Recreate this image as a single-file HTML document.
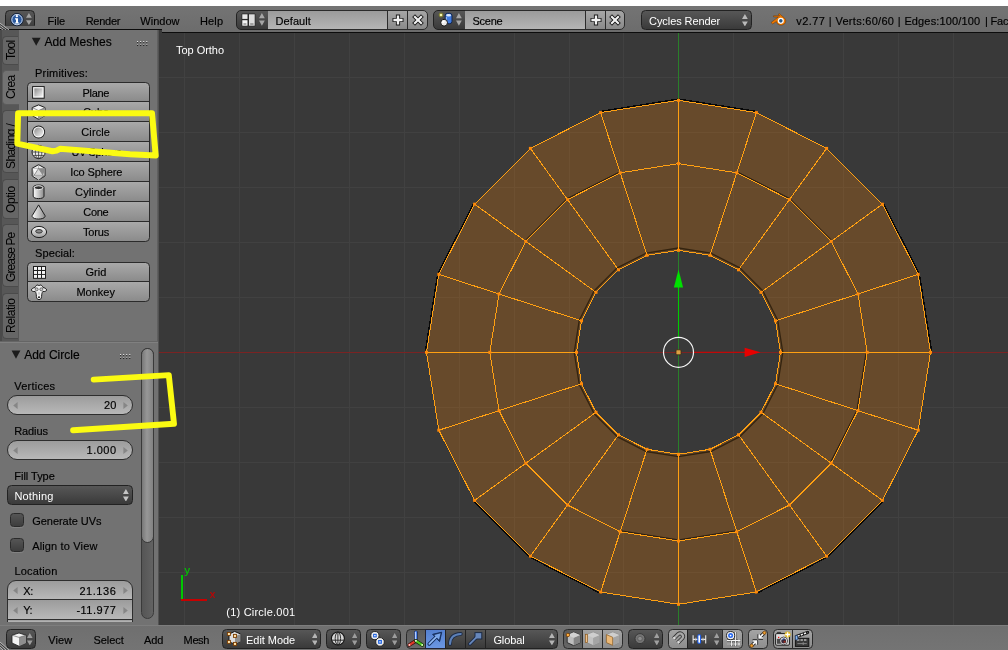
<!DOCTYPE html>
<html><head><meta charset="utf-8"><title>Blender</title>
<style>

html,body{margin:0;padding:0;background:#fff;}
#root{position:relative;will-change:transform;width:1008px;height:650px;overflow:hidden;background:#393939;font-family:"Liberation Sans",sans-serif;}
.a{position:absolute;box-sizing:border-box;}
.t{position:absolute;white-space:pre;-webkit-text-stroke:0.16px currentColor;}
.btn{position:absolute;box-sizing:border-box;border:1px solid #2b2b2b;background:linear-gradient(#a9a9a9,#8b8b8b);}
.num{position:absolute;box-sizing:border-box;border:1px solid #2e2e2e;background:linear-gradient(#9c9c9c,#b8b8b8);}
.menu{position:absolute;box-sizing:border-box;border:1px solid #222;background:linear-gradient(#575757,#3a3a3a);border-radius:4px;}
.lt{position:absolute;box-sizing:border-box;border:1px solid #2b2b2b;background:linear-gradient(#9a9a9a,#7e7e7e);}
.chk{position:absolute;box-sizing:border-box;border:1px solid #2a2a2a;background:linear-gradient(#555,#3d3d3d);border-radius:3.5px;box-shadow:0 1px 0 rgba(255,255,255,0.12);}

</style></head>
<body>
<div id="root">

<svg id="mesh" width="1008" height="650" viewBox="0 0 1008 650" style="position:absolute;left:0;top:0">
<defs><clipPath id="vp"><rect x="158.6" y="30" width="850" height="595.4"/></clipPath></defs>
<g clip-path="url(#vp)">
<path d="M184.5 31V625M239.5 31V625M294.5 31V625M349.5 31V625M404.5 31V625M459.5 31V625M514.5 31V625M569.5 31V625M623.5 31V625M733.5 31V625M788.5 31V625M843.5 31V625M898.5 31V625M953.5 31V625M158 77.5H1008M158 132.5H1008M158 187.5H1008M158 242.5H1008M158 297.5H1008M158 407.5H1008M158 462.5H1008M158 517.5H1008M158 572.5H1008" stroke="#414141" stroke-width="1" fill="none" shape-rendering="crispEdges"/>
<path d="M158 352.3H1008" stroke="#7a2323" stroke-width="1" shape-rendering="crispEdges"/>
<path d="M678.5 31V625" stroke="#2a7f2a" stroke-width="1" shape-rendering="crispEdges"/>
<path d="M678.5 99.0L600.2 111.4M473.6 203.4L437.6 274.0M437.6 274.0L425.2 352.3M473.6 501.2L529.6 557.2M529.6 557.2L600.2 593.2M756.8 593.2L827.4 557.2M827.4 557.2L883.4 501.2M931.8 352.3L919.4 274.0M919.4 274.0L883.4 203.4M756.8 111.4L678.5 99.0" stroke="#080808" stroke-width="1.3" fill="none" shape-rendering="crispEdges"/>
<path d="M678.5 100.3 L600.6 112.6 L530.4 148.4 L474.6 204.2 L438.8 274.4 L426.5 352.3 L438.8 430.2 L474.6 500.4 L530.4 556.2 L600.6 592.0 L678.5 604.3 L756.4 592.0 L826.6 556.2 L882.4 500.4 L918.2 430.2 L930.5 352.3 L918.2 274.4 L882.4 204.2 L826.6 148.4 L756.4 112.6ZM678.5 250.3 L647.0 255.3 L618.5 269.8 L596.0 292.3 L581.5 320.8 L576.5 352.3 L581.5 383.8 L596.0 412.3 L618.5 434.8 L647.0 449.3 L678.5 454.3 L710.0 449.3 L738.5 434.8 L761.0 412.3 L775.5 383.8 L780.5 352.3 L775.5 320.8 L761.0 292.3 L738.5 269.8 L710.0 255.3Z" fill="#ff8500" fill-opacity="0.235" fill-rule="evenodd"/>
<path d="M160 352.3H1008" stroke="#8a3a1a" stroke-width="1" opacity="0.0"/>
<path d="M678.5 248.0 L646.3 253.1 L617.2 267.9 L594.1 291.0 L579.3 320.1 L574.2 352.3 L579.3 384.5 L594.1 413.6 L617.2 436.7 L646.3 451.5 L678.5 456.6 L710.7 451.5 L739.8 436.7 L762.9 413.6 L777.7 384.5 L782.8 352.3 L777.7 320.1 L762.9 291.0 L739.8 267.9 L710.7 253.1Z" stroke="#33230f" stroke-width="1.3" fill="none"/>
<path d="M619.8 171.8L566.9 198.7M566.9 198.7L524.9 240.7M832.1 240.7L790.1 198.7M790.1 198.7L737.2 171.8M620.5 530.7L678.5 539.9M678.5 539.9L736.5 530.7M830.3 462.6L856.9 410.3M856.9 410.3L866.1 352.3" stroke="#2a1c0c" stroke-width="1" fill="none"/>
<path d="M678.5 100.3 L600.6 112.6 L530.4 148.4 L474.6 204.2 L438.8 274.4 L426.5 352.3 L438.8 430.2 L474.6 500.4 L530.4 556.2 L600.6 592.0 L678.5 604.3 L756.4 592.0 L826.6 556.2 L882.4 500.4 L918.2 430.2 L930.5 352.3 L918.2 274.4 L882.4 204.2 L826.6 148.4 L756.4 112.6ZM678.5 163.6 L620.2 172.8 L567.6 199.6 L525.8 241.4 L499.0 294.0 L489.8 352.3 L499.0 410.6 L525.8 463.2 L567.6 505.0 L620.2 531.8 L678.5 541.0 L736.8 531.8 L789.4 505.0 L831.2 463.2 L858.0 410.6 L867.2 352.3 L858.0 294.0 L831.2 241.4 L789.4 199.6 L736.8 172.8ZM678.5 250.3 L647.0 255.3 L618.5 269.8 L596.0 292.3 L581.5 320.8 L576.5 352.3 L581.5 383.8 L596.0 412.3 L618.5 434.8 L647.0 449.3 L678.5 454.3 L710.0 449.3 L738.5 434.8 L761.0 412.3 L775.5 383.8 L780.5 352.3 L775.5 320.8 L761.0 292.3 L738.5 269.8 L710.0 255.3ZM678.5 100.3L678.5 250.3M600.6 112.6L647.0 255.3M530.4 148.4L618.5 269.8M474.6 204.2L596.0 292.3M438.8 274.4L581.5 320.8M426.5 352.3L576.5 352.3M438.8 430.2L581.5 383.8M474.6 500.4L596.0 412.3M530.4 556.2L618.5 434.8M600.6 592.0L647.0 449.3M678.5 604.3L678.5 454.3M756.4 592.0L710.0 449.3M826.6 556.2L738.5 434.8M882.4 500.4L761.0 412.3M918.2 430.2L775.5 383.8M930.5 352.3L780.5 352.3M918.2 274.4L775.5 320.8M882.4 204.2L761.0 292.3M826.6 148.4L738.5 269.8M756.4 112.6L710.0 255.3" stroke="#ffa012" stroke-width="1" fill="none" shape-rendering="crispEdges"/>
<g fill="#ff8a0a"><rect x="677.0" y="98.8" width="3" height="3"/><rect x="599.1" y="111.1" width="3" height="3"/><rect x="528.9" y="146.9" width="3" height="3"/><rect x="473.1" y="202.7" width="3" height="3"/><rect x="437.3" y="272.9" width="3" height="3"/><rect x="425.0" y="350.8" width="3" height="3"/><rect x="437.3" y="428.7" width="3" height="3"/><rect x="473.1" y="498.9" width="3" height="3"/><rect x="528.9" y="554.7" width="3" height="3"/><rect x="599.1" y="590.5" width="3" height="3"/><rect x="677.0" y="602.8" width="3" height="3"/><rect x="754.9" y="590.5" width="3" height="3"/><rect x="825.1" y="554.7" width="3" height="3"/><rect x="880.9" y="498.9" width="3" height="3"/><rect x="916.7" y="428.7" width="3" height="3"/><rect x="929.0" y="350.8" width="3" height="3"/><rect x="916.7" y="272.9" width="3" height="3"/><rect x="880.9" y="202.7" width="3" height="3"/><rect x="825.1" y="146.9" width="3" height="3"/><rect x="754.9" y="111.1" width="3" height="3"/><rect x="677.0" y="162.1" width="3" height="3"/><rect x="618.7" y="171.3" width="3" height="3"/><rect x="566.1" y="198.1" width="3" height="3"/><rect x="524.3" y="239.9" width="3" height="3"/><rect x="497.5" y="292.5" width="3" height="3"/><rect x="488.3" y="350.8" width="3" height="3"/><rect x="497.5" y="409.1" width="3" height="3"/><rect x="524.3" y="461.7" width="3" height="3"/><rect x="566.1" y="503.5" width="3" height="3"/><rect x="618.7" y="530.3" width="3" height="3"/><rect x="677.0" y="539.5" width="3" height="3"/><rect x="735.3" y="530.3" width="3" height="3"/><rect x="787.9" y="503.5" width="3" height="3"/><rect x="829.7" y="461.7" width="3" height="3"/><rect x="856.5" y="409.1" width="3" height="3"/><rect x="865.7" y="350.8" width="3" height="3"/><rect x="856.5" y="292.5" width="3" height="3"/><rect x="829.7" y="239.9" width="3" height="3"/><rect x="787.9" y="198.1" width="3" height="3"/><rect x="735.3" y="171.3" width="3" height="3"/><rect x="677.0" y="248.8" width="3" height="3"/><rect x="645.5" y="253.8" width="3" height="3"/><rect x="617.0" y="268.3" width="3" height="3"/><rect x="594.5" y="290.8" width="3" height="3"/><rect x="580.0" y="319.3" width="3" height="3"/><rect x="575.0" y="350.8" width="3" height="3"/><rect x="580.0" y="382.3" width="3" height="3"/><rect x="594.5" y="410.8" width="3" height="3"/><rect x="617.0" y="433.3" width="3" height="3"/><rect x="645.5" y="447.8" width="3" height="3"/><rect x="677.0" y="452.8" width="3" height="3"/><rect x="708.5" y="447.8" width="3" height="3"/><rect x="737.0" y="433.3" width="3" height="3"/><rect x="759.5" y="410.8" width="3" height="3"/><rect x="774.0" y="382.3" width="3" height="3"/><rect x="779.0" y="350.8" width="3" height="3"/><rect x="774.0" y="319.3" width="3" height="3"/><rect x="759.5" y="290.8" width="3" height="3"/><rect x="737.0" y="268.3" width="3" height="3"/><rect x="708.5" y="253.8" width="3" height="3"/></g>
<path d="M678.5 337.3V287" stroke="#00cc00" stroke-width="1.1"/>
<path d="M678.5 269.5L673.9 287.5H683.1Z" fill="#00e000"/>
<path d="M693.5 352.3H746" stroke="#d80000" stroke-width="1.1"/>
<path d="M760.5 352.3L744.6 347.7V356.9Z" fill="#e80000"/>
<circle cx="678.5" cy="352.3" r="15" stroke="#f4f4f4" stroke-width="1.2" fill="none"/>
<rect x="676.0" y="349.8" width="5" height="5" rx="1" fill="#dca044" stroke="#3a2a10" stroke-width="0.8"/>
<path d="M182 575V600" stroke="#00c800" stroke-width="2" shape-rendering="crispEdges"/>
<path d="M181 600H207" stroke="#c80000" stroke-width="2" shape-rendering="crispEdges"/>
</g></svg>
<div class="a" style="left:0;top:0;width:1008px;height:6px;background:#fff"></div>
<div class="a" style="left:0;top:6px;width:161.7px;height:23px;background:linear-gradient(#747474,#6d6d6d)"></div>
<div class="a" style="left:0;top:29px;width:161.7px;height:1.3px;background:#0c0c0c"></div>
<div class="a" style="left:161.7px;top:6px;width:847px;height:26px;background:linear-gradient(#747474,#6c6c6c)"></div>
<div class="a" style="left:161.7px;top:32px;width:847px;height:1.2px;background:#0c0c0c"></div>
<div class="a" style="left:5px;top:10px;width:30px;height:16.4px;overflow:hidden"><div class="menu" style="left:0;top:0;width:30px;height:19.5px;border-radius:4.5px"></div></div>
<svg class="a" style="left:9px;top:12px" width="16" height="16" viewBox="0 0 16 16"><circle cx="8" cy="7.6" r="6.2" fill="#2b5aa0" stroke="#16233a" stroke-width="1"/><circle cx="8" cy="7.6" r="5.2" fill="none" stroke="#dfe8f5" stroke-width="0.9"/><path d="M6 6.2h3v4.2h1.1v1.2H5.9v-1.2H7V7.4H6z" fill="#fff"/><circle cx="7.9" cy="4.2" r="1.15" fill="#fff"/></svg>
<svg class="a" style="left:26.2px;top:13.2px" width="5.8" height="12" viewBox="0 0 5.8 12"><path d="M2.9 0L5.8 4.8H0Z M2.9 12L5.8 7.2H0Z" fill="#a2a2a2"/></svg>
<svg class="a" style="left:0;top:22px" width="11" height="8" viewBox="0 0 11 8"><path d="M0 1.2L9 8M0 3.6L6 8M0 6L3 8" stroke="#b4b4b4" stroke-width="1" fill="none"/><path d="M0 2.4L7.5 8M0 4.8L4.5 8" stroke="#3c3c3c" stroke-width="1" fill="none"/></svg>
<div class="menu" style="left:236px;top:10px;width:33px;height:20px;border-radius:5px 0 0 5px"></div><div class="lt" style="left:268px;top:10px;width:120px;height:20px;background:linear-gradient(#9b9b9b,#b5b5b5);border-left:none"></div><div class="lt" style="left:387px;top:10px;width:21px;height:20px;background:linear-gradient(#a6a6a6,#8a8a8a)"></div><div class="lt" style="left:407px;top:10px;width:21px;height:20px;background:linear-gradient(#a6a6a6,#8a8a8a);border-radius:0 5px 5px 0"></div><svg class="a" style="left:390.5px;top:13.0px" width="14" height="14" viewBox="0 0 14 14"><path d="M7 1.5V12.5M1.5 7H12.5" stroke="#1a1a1a" stroke-width="4.2"/><path d="M7 2.4V11.6M2.4 7H11.6" stroke="#f2f2f2" stroke-width="2.3"/></svg><svg class="a" style="left:410.5px;top:13.0px" width="14" height="14" viewBox="0 0 14 14"><path d="M2.6 2.6L11.4 11.4M11.4 2.6L2.6 11.4" stroke="#1a1a1a" stroke-width="4"/><path d="M3.2 3.2L10.8 10.8M10.8 3.2L3.2 10.8" stroke="#f2f2f2" stroke-width="2.1"/></svg><svg class="a" style="left:259px;top:13.3px" width="5.8" height="12.8" viewBox="0 0 5.8 12.8"><path d="M2.9 0L5.8 5.2H0Z M2.9 12.8L5.8 7.6000000000000005H0Z" fill="#a6a6a6"/></svg><svg class="a" style="left:241px;top:13px" width="15" height="14" viewBox="0 0 15 14"><rect x="0.5" y="0.5" width="14" height="13" rx="1" fill="#2a2a2a"/><rect x="1.3" y="1.3" width="5.2" height="4.6" fill="#e8e8e8"/><rect x="1.3" y="7.2" width="5.2" height="5.5" fill="#f4f4f4"/><rect x="8" y="1.3" width="5.7" height="11.4" fill="#dcdcdc"/><path d="M2.4 11h3M9.2 11h3.3" stroke="#555" stroke-width="0.9"/></svg>
<div class="menu" style="left:433px;top:10px;width:33px;height:20px;border-radius:5px 0 0 5px"></div><div class="lt" style="left:465px;top:10px;width:121px;height:20px;background:linear-gradient(#9b9b9b,#b5b5b5);border-left:none"></div><div class="lt" style="left:585px;top:10px;width:21px;height:20px;background:linear-gradient(#a6a6a6,#8a8a8a)"></div><div class="lt" style="left:605px;top:10px;width:20px;height:20px;background:linear-gradient(#a6a6a6,#8a8a8a);border-radius:0 5px 5px 0"></div><svg class="a" style="left:588.5px;top:13.0px" width="14" height="14" viewBox="0 0 14 14"><path d="M7 1.5V12.5M1.5 7H12.5" stroke="#1a1a1a" stroke-width="4.2"/><path d="M7 2.4V11.6M2.4 7H11.6" stroke="#f2f2f2" stroke-width="2.3"/></svg><svg class="a" style="left:608.0px;top:13.0px" width="14" height="14" viewBox="0 0 14 14"><path d="M2.6 2.6L11.4 11.4M11.4 2.6L2.6 11.4" stroke="#1a1a1a" stroke-width="4"/><path d="M3.2 3.2L10.8 10.8M10.8 3.2L3.2 10.8" stroke="#f2f2f2" stroke-width="2.1"/></svg><svg class="a" style="left:456px;top:13.3px" width="5.8" height="12.8" viewBox="0 0 5.8 12.8"><path d="M2.9 0L5.8 5.2H0Z M2.9 12.8L5.8 7.6000000000000005H0Z" fill="#a6a6a6"/></svg><svg class="a" style="left:436px;top:10px" width="20" height="20" viewBox="436 10 20 20"><rect x="445.2" y="13.3" width="6.8" height="10.4" rx="2.4" fill="#3f7be0" stroke="#12264f" stroke-width="1"/><ellipse cx="448.6" cy="15.2" rx="2.5" ry="1.3" fill="#dbe8fb"/><path d="M446.4 17V22" stroke="#9cc0f4" stroke-width="1"/><circle cx="444.1" cy="22.7" r="3.4" fill="#ececec" stroke="#161616" stroke-width="1"/><circle cx="443.3" cy="21.8" r="1.3" fill="#fff"/><circle cx="441" cy="15" r="2.4" fill="#8a8a20" opacity="0.7"/><circle cx="441" cy="15" r="1.3" fill="#f4f4b0"/></svg>
<div class="menu" style="left:641px;top:10px;width:111px;height:20px;border-radius:4.5px"></div>
<svg class="a" style="left:742.3px;top:13.5px" width="5.8" height="12.5" viewBox="0 0 5.8 12.5"><path d="M2.9 0L5.8 5.05H0Z M2.9 12.5L5.8 7.45H0Z" fill="#b9b9b9"/></svg>
<svg class="a" style="left:770.3px;top:12.6px" width="17" height="14.5" viewBox="0 0 20 17"><path d="M1.2 11.2L9.8 4.6H4.2L4.2 3.2H11.4L9.6 1.6 10.9 0.6 17.2 6.2C18.9 7.8 19 10.6 17.4 12.4 15.4 14.6 11.6 14.9 9.2 13 8 12 7.6 11 7.5 10L3.2 12.9Z" fill="#ea7600" stroke="#5a2d00" stroke-width="0.5"/><circle cx="12.7" cy="9.2" r="3.6" fill="#fff"/><circle cx="12.7" cy="9.2" r="2.1" fill="#265787"/></svg>
<div class="a" style="left:0;top:30.3px;width:157.5px;height:312px;background:#727272"></div>
<div class="a" style="left:0;top:30.3px;width:18.5px;height:312px;background:#575757"></div>
<div class="a" style="left:157px;top:30.3px;width:1.8px;height:595px;background:linear-gradient(90deg,#666,#4c4c4c)"></div>
<div class="a" style="left:0;top:30.3px;width:1.6px;height:312px;background:#4a4a4a"></div>
<div class="a" style="left:1.7px;top:35.6px;width:16.6px;height:29.1px;background:#666;border-radius:4.5px 0 0 4.5px;border:1px solid #4b4b4b;border-right:none"></div>
<div class="a" style="left:1.7px;top:69.5px;width:17.6px;height:35.400000000000006px;background:#727272;border-radius:4.5px 0 0 4.5px;border:1px solid #5c5c5c;border-right:none"></div>
<div class="a" style="left:1.7px;top:109.6px;width:16.6px;height:63.70000000000002px;background:#666;border-radius:4.5px 0 0 4.5px;border:1px solid #4b4b4b;border-right:none"></div>
<div class="a" style="left:1.7px;top:178.8px;width:16.6px;height:40.69999999999999px;background:#666;border-radius:4.5px 0 0 4.5px;border:1px solid #4b4b4b;border-right:none"></div>
<div class="a" style="left:1.7px;top:223.5px;width:16.6px;height:63.80000000000001px;background:#666;border-radius:4.5px 0 0 4.5px;border:1px solid #4b4b4b;border-right:none"></div>
<div class="a" style="left:1.7px;top:292.7px;width:16.6px;height:46.10000000000002px;background:#666;border-radius:4.5px 0 0 4.5px;border:1px solid #4b4b4b;border-right:none"></div>
<svg class="a" style="left:31px;top:37px" width="11" height="10" viewBox="0 0 11 10"><path d="M0.8 0.8H9.6L5.2 8.8Z" fill="#1c1c1c"/></svg>
<svg class="a" style="left:136.8px;top:40.7px" width="12" height="6" viewBox="0 0 12 6"><g fill="#e2e2e2"><rect x="0.00" y="0.00" width="1.1" height="1.1"/><rect x="0.00" y="2.60" width="1.1" height="1.1"/><rect x="3.07" y="0.00" width="1.1" height="1.1"/><rect x="3.07" y="2.60" width="1.1" height="1.1"/><rect x="6.14" y="0.00" width="1.1" height="1.1"/><rect x="6.14" y="2.60" width="1.1" height="1.1"/><rect x="9.21" y="0.00" width="1.1" height="1.1"/><rect x="9.21" y="2.60" width="1.1" height="1.1"/></g><g fill="#1a1a1a"><rect x="0.00" y="1.25" width="1.1" height="1.1"/><rect x="0.00" y="3.85" width="1.1" height="1.1"/><rect x="3.07" y="1.25" width="1.1" height="1.1"/><rect x="3.07" y="3.85" width="1.1" height="1.1"/><rect x="6.14" y="1.25" width="1.1" height="1.1"/><rect x="6.14" y="3.85" width="1.1" height="1.1"/><rect x="9.21" y="1.25" width="1.1" height="1.1"/><rect x="9.21" y="3.85" width="1.1" height="1.1"/></g></svg>
<div class="btn" style="left:27px;top:82px;width:123px;height:20px;border-radius:4.5px 4.5px 0 0"></div>
<div class="btn" style="left:27px;top:101px;width:123px;height:21px;border-radius:0"></div>
<div class="btn" style="left:27px;top:121px;width:123px;height:21px;border-radius:0"></div>
<div class="btn" style="left:27px;top:141px;width:123px;height:21px;border-radius:0"></div>
<div class="btn" style="left:27px;top:161px;width:123px;height:21px;border-radius:0"></div>
<div class="btn" style="left:27px;top:181px;width:123px;height:21px;border-radius:0"></div>
<div class="btn" style="left:27px;top:201px;width:123px;height:21px;border-radius:0"></div>
<div class="btn" style="left:27px;top:221px;width:123px;height:21px;border-radius:0 0 4.5px 4.5px"></div>
<div class="btn" style="left:27px;top:262px;width:123px;height:20px;border-radius:4.5px 4.5px 0 0"></div>
<div class="btn" style="left:27px;top:281px;width:123px;height:21px;border-radius:0 0 4.5px 4.5px"></div>
<svg width="0" height="0" style="position:absolute"><defs><linearGradient id="gw" x1="0" y1="0" x2="1" y2="1"><stop offset="0" stop-color="#8c8c8c"/><stop offset="1" stop-color="#f4f4f4"/></linearGradient><linearGradient id="gv" x1="0" y1="0" x2="0" y2="1"><stop offset="0" stop-color="#fff"/><stop offset="1" stop-color="#9a9a9a"/></linearGradient><linearGradient id="gh" x1="0" y1="0" x2="1" y2="0"><stop offset="0" stop-color="#fff"/><stop offset="1" stop-color="#8a8a8a"/></linearGradient></defs></svg>
<svg class="a" style="left:31.4px;top:84.6px" width="16" height="16" viewBox="0 0 16 16"><rect x="1.1" y="1.1" width="12.6" height="12.6" fill="#1e1e1e"/><rect x="2.1" y="2.1" width="10.6" height="10.6" fill="#fcfcfc"/><rect x="3.3" y="3.3" width="8.2" height="8.2" fill="url(#gw)"/></svg>
<svg class="a" style="left:31.4px;top:104px" width="16" height="16" viewBox="0 0 16 16"><path d="M7.6 0.9L14 3.6V11.6L7.6 15.4 1.2 11.6V3.6Z" fill="#f4f4f4" stroke="#1e1e1e" stroke-width="1"/><path d="M7.6 6.6L14 3.6V11.6L7.6 15.4Z" fill="#9a9a9a"/><path d="M1.2 3.6L7.6 6.6 14 3.6M7.6 6.6V15.2" stroke="#555" stroke-width="0.6" fill="none"/></svg>
<svg class="a" style="left:31.4px;top:123.9px" width="16" height="16" viewBox="0 0 16 16"><circle cx="7.6" cy="8" r="6.5" fill="#1e1e1e"/><circle cx="7.6" cy="8" r="5.6" fill="#fcfcfc"/><circle cx="7.6" cy="8" r="4.5" fill="url(#gw)"/></svg>
<svg class="a" style="left:31.4px;top:143.9px" width="16" height="16" viewBox="0 0 16 16"><circle cx="7.6" cy="8" r="6.6" fill="#ececec" stroke="#1e1e1e" stroke-width="1"/><path d="M1 8H14.2M7.6 1.4V14.6M2.2 4.6H13M2.2 11.4H13" stroke="#333" stroke-width="0.8" fill="none"/><ellipse cx="7.6" cy="8" rx="3.3" ry="6.6" fill="none" stroke="#333" stroke-width="0.8"/></svg>
<svg class="a" style="left:31.4px;top:163.6px" width="16" height="16" viewBox="0 0 16 16"><path d="M7.6 0.7L14 4.2V12L7.6 16 1.2 12V4.2Z" fill="#f6f6f6" stroke="#1e1e1e" stroke-width="1"/><path d="M7.6 4.4L3 11.4H12.2Z" fill="#d8d8d8" stroke="#555" stroke-width="0.6"/><path d="M7.6 4.4L12.2 11.4 14 4.2Z" fill="#8a8a8a"/><path d="M12.2 11.4L14 12 7.6 16Z" fill="#5a5a5a"/><path d="M3 11.4L7.6 16 12.2 11.4Z" fill="#bdbdbd"/><path d="M7.6 0.7V4.4M1.2 4.2L7.6 4.4 14 4.2M1.2 12L3 11.4M1.2 4.2L3 11.4" stroke="#777" stroke-width="0.5" fill="none"/></svg>
<svg class="a" style="left:31.4px;top:184.2px" width="16" height="16" viewBox="0 0 16 16"><path d="M2.2 3.4V12.2C2.2 15.4 13 15.4 13 12.2V3.4C13 0.2 2.2 0.2 2.2 3.4Z" fill="url(#gh)" stroke="#1e1e1e" stroke-width="1"/><ellipse cx="7.6" cy="3.7" rx="4.2" ry="1.9" fill="#2e2e2e" stroke="#f8f8f8" stroke-width="0.9"/></svg>
<svg class="a" style="left:31.4px;top:203.8px" width="16" height="16" viewBox="0 0 16 16"><path d="M7.6 0.9L1.2 11.6C-0.2 16.2 15.4 16.2 14 11.6Z" fill="url(#gh)" stroke="#1e1e1e" stroke-width="1"/></svg>
<svg class="a" style="left:31px;top:223.9px" width="16" height="16" viewBox="0 0 16 16"><ellipse cx="8" cy="8" rx="7.6" ry="5.6" fill="url(#gv)" stroke="#1e1e1e" stroke-width="1"/><ellipse cx="8" cy="7.3" rx="3.3" ry="1.8" fill="#8a8a8a" stroke="#2a2a2a" stroke-width="0.9"/></svg>
<svg class="a" style="left:33px;top:266.1px" width="13" height="13" viewBox="0 0 13 13"><rect x="0" y="0" width="13" height="12.8" fill="#1e1e1e"/><g fill="#f6f6f6"><rect x="1.0" y="1.0" width="3.0" height="2.95"/><rect x="1.0" y="5.0" width="3.0" height="2.95"/><rect x="1.0" y="8.9" width="3.0" height="2.95"/><rect x="5.0" y="1.0" width="3.0" height="2.95"/><rect x="5.0" y="5.0" width="3.0" height="2.95"/><rect x="5.0" y="8.9" width="3.0" height="2.95"/><rect x="9.0" y="1.0" width="3.0" height="2.95"/><rect x="9.0" y="5.0" width="3.0" height="2.95"/><rect x="9.0" y="8.9" width="3.0" height="2.95"/></g></svg>
<svg class="a" style="left:31px;top:284.2px" width="16" height="16" viewBox="0 0 16 16"><path d="M4 3.6C4.6 1.6 5.8 0.9 7 1 7.4 1.1 7.7 1.5 8 2 8.3 1.5 8.6 1.1 9 1 10.2 0.9 11.4 1.6 12 3.6 13.2 3.6 15.6 4.6 15.6 6 15.6 7.2 13.6 7.8 11.9 7.4 11 8.6 10.7 10 10.6 12.4 10.5 14.6 9.6 15.6 8 15.6 6.4 15.6 5.5 14.6 5.4 12.4 5.3 10 5 8.6 4.1 7.4 2.4 7.8 0.4 7.2 0.4 6 0.4 4.6 2.8 3.6 4 3.6Z" fill="#f0f0f0" stroke="#1e1e1e" stroke-width="1"/><circle cx="5.7" cy="5.3" r="1.45" fill="#c8c8c8" stroke="#444" stroke-width="0.7"/><circle cx="10.3" cy="5.3" r="1.45" fill="#c8c8c8" stroke="#444" stroke-width="0.7"/><ellipse cx="8" cy="13.2" rx="1.1" ry="0.9" fill="#2a2a2a"/><path d="M8 8.2V10.6" stroke="#999" stroke-width="0.8"/></svg>
<div class="a" style="left:0;top:342.3px;width:157.5px;height:283px;background:#727272"></div>
<div class="a" style="left:0;top:341px;width:158px;height:1px;background:#656565"></div><div class="a" style="left:0;top:342px;width:158px;height:1px;background:#808080"></div>
<svg class="a" style="left:11px;top:350.3px" width="11" height="10" viewBox="0 0 11 10"><path d="M0.6 0.6H9.4L5 8.8Z" fill="#1c1c1c"/></svg>
<svg class="a" style="left:119.8px;top:354px" width="12" height="6" viewBox="0 0 12 6"><g fill="#e2e2e2"><rect x="0.00" y="0.00" width="1.1" height="1.1"/><rect x="0.00" y="2.60" width="1.1" height="1.1"/><rect x="3.07" y="0.00" width="1.1" height="1.1"/><rect x="3.07" y="2.60" width="1.1" height="1.1"/><rect x="6.14" y="0.00" width="1.1" height="1.1"/><rect x="6.14" y="2.60" width="1.1" height="1.1"/><rect x="9.21" y="0.00" width="1.1" height="1.1"/><rect x="9.21" y="2.60" width="1.1" height="1.1"/></g><g fill="#1a1a1a"><rect x="0.00" y="1.25" width="1.1" height="1.1"/><rect x="0.00" y="3.85" width="1.1" height="1.1"/><rect x="3.07" y="1.25" width="1.1" height="1.1"/><rect x="3.07" y="3.85" width="1.1" height="1.1"/><rect x="6.14" y="1.25" width="1.1" height="1.1"/><rect x="6.14" y="3.85" width="1.1" height="1.1"/><rect x="9.21" y="1.25" width="1.1" height="1.1"/><rect x="9.21" y="3.85" width="1.1" height="1.1"/></g></svg>
<div class="a" style="left:141px;top:348px;width:13px;height:271px;border-radius:6.5px;background:linear-gradient(90deg,#555,#636363);border:1px solid #3a3a3a"></div>
<div class="a" style="left:141px;top:348px;width:13px;height:194.5px;border-radius:6.5px;background:linear-gradient(90deg,#787878,#979797 45%,#828282);border:1px solid #3a3a3a"></div>
<div class="num" style="left:7px;top:395px;width:126px;height:20px;border-radius:10px"></div>
<svg class="a" style="left:12.6px;top:401.5px" width="5" height="7" viewBox="0 0 5 7"><path d="M4.6 0V7L0.2 3.5Z" fill="#868686"/></svg><svg class="a" style="left:122.6px;top:401.5px" width="5" height="7" viewBox="0 0 5 7"><path d="M0.4 0V7L4.8 3.5Z" fill="#868686"/></svg>
<div class="num" style="left:7px;top:440px;width:126px;height:20px;border-radius:10px"></div>
<svg class="a" style="left:12.6px;top:446.5px" width="5" height="7" viewBox="0 0 5 7"><path d="M4.6 0V7L0.2 3.5Z" fill="#868686"/></svg><svg class="a" style="left:122.6px;top:446.5px" width="5" height="7" viewBox="0 0 5 7"><path d="M0.4 0V7L4.8 3.5Z" fill="#868686"/></svg>
<div class="menu" style="left:7px;top:485px;width:126px;height:20px;border-radius:4.5px"></div>
<svg class="a" style="left:123.3px;top:488.6px" width="5.8" height="12.6" viewBox="0 0 5.8 12.6"><path d="M2.9 0L5.8 5.1H0Z M2.9 12.6L5.8 7.5H0Z" fill="#c4c4c4"/></svg>
<div class="chk" style="left:10px;top:513px;width:14px;height:14px"></div>
<div class="chk" style="left:10px;top:538px;width:14px;height:14px"></div>
<div class="num" style="left:7px;top:580px;width:126px;height:20px;border-radius:9px 9px 0 0"></div>
<svg class="a" style="left:12.6px;top:586.5px" width="5" height="7" viewBox="0 0 5 7"><path d="M4.6 0V7L0.2 3.5Z" fill="#868686"/></svg><svg class="a" style="left:122.6px;top:586.5px" width="5" height="7" viewBox="0 0 5 7"><path d="M0.4 0V7L4.8 3.5Z" fill="#868686"/></svg>
<div class="num" style="left:7px;top:599px;width:126px;height:21px;border-radius:0"></div>
<svg class="a" style="left:12.6px;top:606.5px" width="5" height="7" viewBox="0 0 5 7"><path d="M4.6 0V7L0.2 3.5Z" fill="#868686"/></svg><svg class="a" style="left:122.6px;top:606.5px" width="5" height="7" viewBox="0 0 5 7"><path d="M0.4 0V7L4.8 3.5Z" fill="#868686"/></svg>
<div class="num" style="left:7px;top:619px;width:126px;height:2.5px;border-radius:0;border-bottom:none"></div>
<div class="a" style="left:0;top:625.3px;width:1008px;height:25px;background:linear-gradient(#6f6f6f,#747474)"></div>
<div class="a" style="left:0;top:625px;width:1008px;height:1px;background:#7d7d7d"></div>
<div class="menu" style="left:6px;top:629px;width:30px;height:20px;border-radius:4.5px"></div>
<svg class="a" style="left:10.5px;top:631.5px" width="16" height="15" viewBox="0 0 16 15"><path d="M1 3.2L8 1 15 3.2V11L8 14.2 1 11Z" fill="#f2f2f2" stroke="#1e1e1e" stroke-width="0.8"/><path d="M8 5.4V14.2L15 11V3.2Z" fill="#8e8e8e"/><path d="M1 3.2L8 5.4 15 3.2" fill="none" stroke="#555" stroke-width="0.6"/></svg>
<svg class="a" style="left:27.3px;top:632.6px" width="5.6" height="12.4" viewBox="0 0 5.6 12.4"><path d="M2.8 0L5.6 5.0H0Z M2.8 12.4L5.6 7.4H0Z" fill="#9c9c9c"/></svg>
<svg class="a" style="left:0;top:641px" width="10" height="9" viewBox="0 0 10 9"><path d="M0 1L9 9M0 3.6L6 9M0 6.2L3 9" stroke="#b4b4b4" stroke-width="1" fill="none"/><path d="M0 2.3L7.5 9M0 4.9L4.5 9" stroke="#3c3c3c" stroke-width="1" fill="none"/></svg>
<div class="menu" style="left:222px;top:629px;width:99px;height:20px;border-radius:4.5px"></div>
<svg class="a" style="left:311.5px;top:632.6px" width="5.8" height="12.4" viewBox="0 0 5.8 12.4"><path d="M2.9 0L5.8 5.0H0Z M2.9 12.4L5.8 7.4H0Z" fill="#b4b4b4"/></svg>
<svg class="a" style="left:226px;top:630px" width="17" height="17" viewBox="226 630 17 17"><path d="M229 634.2L234.6 631.4 240.6 634V641.2L235 644.2 229 641.9Z" fill="#dcdcdc" stroke="#161616" stroke-width="1"/><path d="M235 636.2L240.6 634V641.2L235 644.2Z" fill="#8e8e8e"/><g fill="#ffe2a8" stroke="#7a3c00" stroke-width="0.9"><rect x="227.4" y="632.5" width="3" height="3"/><rect x="233.5" y="634.4" width="3" height="3"/><rect x="227.4" y="640.4" width="3" height="3"/><rect x="233.5" y="642.4" width="3" height="3"/></g></svg>
<div class="menu" style="left:326px;top:629px;width:35px;height:20px;border-radius:4.5px"></div>
<svg class="a" style="left:330px;top:630px" width="16" height="17" viewBox="330 630 16 17"><circle cx="337.9" cy="638.5" r="6.5" fill="#d6d6d6" stroke="#141414" stroke-width="1.1"/><path d="M331.6 640.2H344.2M337.9 632V645" stroke="#222" stroke-width="0.9" fill="none"/><ellipse cx="337.9" cy="638.5" rx="2.7" ry="6.3" fill="none" stroke="#222" stroke-width="0.9"/></svg>
<svg class="a" style="left:352px;top:632.7px" width="5.4" height="12.5" viewBox="0 0 5.4 12.5"><path d="M2.7 0L5.4 5.05H0Z M2.7 12.5L5.4 7.45H0Z" fill="#9c9c9c"/></svg>
<div class="menu" style="left:366px;top:629px;width:35px;height:20px;border-radius:4.5px"></div>
<svg class="a" style="left:369px;top:630px" width="18" height="18" viewBox="369 630 18 18"><circle cx="374.9" cy="635.6" r="4.1" fill="#ececec" stroke="#1a1a1a" stroke-width="0.9"/><rect x="373.1" y="633.8" width="3.6" height="3.6" fill="#1f62e0"/><rect x="374.2" y="634.9" width="1.4" height="1.4" fill="#fff"/><circle cx="380" cy="641.9" r="4.3" fill="#ececec" stroke="#1a1a1a" stroke-width="0.9"/><rect x="378.1" y="640" width="3.8" height="3.8" fill="#1f62e0"/><rect x="379.3" y="641.2" width="1.4" height="1.4" fill="#fff"/></svg>
<svg class="a" style="left:391.9px;top:632.7px" width="5.4" height="12.5" viewBox="0 0 5.4 12.5"><path d="M2.7 0L5.4 5.05H0Z M2.7 12.5L5.4 7.45H0Z" fill="#9c9c9c"/></svg>
<div class="lt" style="left:406px;top:629px;width:20px;height:20px;border-radius:4.5px 0 0 4.5px;background:linear-gradient(#5c5c5c,#686868)"></div>
<div class="lt" style="left:425px;top:629px;width:21px;height:20px;background:linear-gradient(#5480d0,#6b97e3);border-color:#223"></div>
<div class="menu" style="left:445px;top:629px;width:21px;height:20px;border-radius:0"></div>
<div class="menu" style="left:465px;top:629px;width:21px;height:20px;border-radius:0"></div>
<div class="menu" style="left:485px;top:629px;width:73px;height:20px;border-radius:0 4.5px 4.5px 0"></div>
<svg class="a" style="left:549px;top:632.6px" width="5.8" height="12.4" viewBox="0 0 5.8 12.4"><path d="M2.9 0L5.8 5.0H0Z M2.9 12.4L5.8 7.4H0Z" fill="#b4b4b4"/></svg>
<svg class="a" style="left:404px;top:626px" width="90" height="24" viewBox="404 626 90 24"><path d="M415.9 640.9V632.2" stroke="#1d2c55" stroke-width="3.6" stroke-linecap="round"/><path d="M415.9 640.9V632.2" stroke="#4f86ee" stroke-width="2.2" stroke-linecap="round"/><path d="M415.4 639V632.4" stroke="#dfeaff" stroke-width="0.8" stroke-linecap="round"/><path d="M415.9 640.9L409.3 645" stroke="#3a1010" stroke-width="3.6" stroke-linecap="round"/><path d="M415.9 640.9L409.3 645" stroke="#e03a2a" stroke-width="2.2" stroke-linecap="round"/><circle cx="409.4" cy="644.9" r="0.9" fill="#ffd8d0"/><path d="M415.9 640.9L422.3 645" stroke="#12300c" stroke-width="3.6" stroke-linecap="round"/><path d="M415.9 640.9L422.3 645" stroke="#4ec81e" stroke-width="2.2" stroke-linecap="round"/><circle cx="422.2" cy="644.9" r="0.9" fill="#f0ffd0"/><circle cx="415.9" cy="640.7" r="1" fill="#e8e8d8"/><path d="M429.2 643.9L436.4 636.7" stroke="#173060" stroke-width="3.6" stroke-linecap="round"/><path d="M432.6 634.3L441.7 632.2 439.6 641.6Z" fill="#173060" stroke="#173060" stroke-width="1" stroke-linejoin="round"/><path d="M429.3 643.8L436.8 636.3" stroke="#8fb8f4" stroke-width="1.7" stroke-linecap="round"/><path d="M434.2 634.9L440.6 633.3 439 639.8Z" fill="#7aa6ea"/><path d="M450 644C450 638 453.6 634.3 460.8 633.9" stroke="#1c2a44" stroke-width="3.8" fill="none" stroke-linecap="round"/><path d="M450 644C450 638 453.6 634.3 460.8 633.9" stroke="#5d81b8" stroke-width="2" fill="none" stroke-linecap="round"/><path d="M469.8 643.9L477 636.7" stroke="#1c2a44" stroke-width="3.6" stroke-linecap="round"/><rect x="475" y="632.6" width="6.8" height="6.4" fill="#6787bb" stroke="#1c2a44" stroke-width="1"/><path d="M469.9 643.8L476.6 637.1" stroke="#6787bb" stroke-width="1.8" stroke-linecap="round"/></svg>
<div class="lt" style="left:563px;top:629px;width:20px;height:20px;border-radius:4.5px 0 0 4.5px;background:linear-gradient(#5a5a5a,#666)"></div>
<div class="lt" style="left:582px;top:629px;width:21px;height:20px;background:linear-gradient(#a4a4a4,#8e8e8e)"></div>
<div class="lt" style="left:602px;top:629px;width:21px;height:20px;border-radius:0 4.5px 4.5px 0;background:linear-gradient(#a4a4a4,#8e8e8e)"></div>
<svg class="a" style="left:560px;top:626px" width="70" height="24" viewBox="560 626 70 24"><path d="M567.2 635L573.7 632.2 580.2 635V642.6L573.7 645.6 567.2 642.6Z" fill="#bdbdbd" stroke="#2a2a2a" stroke-width="0.9"/><path d="M573.7 637.8L580.2 635V642.6L573.7 645.6Z" fill="#858585"/><path d="M567.2 635L573.7 637.8 580.2 635L573.7 632.2Z" fill="#d2d2d2"/><circle cx="567.9" cy="635" r="1.7" fill="#ffb040" stroke="#7a3c00" stroke-width="0.8"/><path d="M586.6 635L593.1 632.2 599.6 635V642.6L593.1 645.6 586.6 642.6Z" fill="#c2c2c2" stroke="#8a8a8a" stroke-width="0.9"/><path d="M593.1 637.8L599.6 635V642.6L593.1 645.6Z" fill="#a4a4a4"/><path d="M586.6 635L593.1 637.8 599.6 635L593.1 632.2Z" fill="#cecece"/><rect x="585.4" y="634.3" width="2" height="8.2" fill="#f0c088" stroke="#8a5a20" stroke-width="0.7"/><path d="M606.3 635L612.8 632.2 619.3 635V642.6L612.8 645.6 606.3 642.6Z" fill="#c2c2c2" stroke="#8a8a8a" stroke-width="0.9"/><path d="M612.8 637.8L619.3 635V642.6L612.8 645.6Z" fill="#a4a4a4"/><path d="M606.3 635L612.8 637.8 619.3 635L612.8 632.2Z" fill="#cecece"/><path d="M606.4 634.6L612.6 637.2V645.3L606.4 642.6Z" fill="#eab877" stroke="#8a5a20" stroke-width="0.7"/></svg>
<div class="menu" style="left:628px;top:629px;width:35px;height:20px;border-radius:4.5px"></div>
<svg class="a" style="left:633px;top:631px" width="15" height="15" viewBox="633 631 15 15"><circle cx="640" cy="638.6" r="5" fill="#737373" stroke="#333" stroke-width="0.9"/><circle cx="640" cy="638.6" r="2.3" fill="#8c8c8c" stroke="#555" stroke-width="0.7"/></svg>
<svg class="a" style="left:653.8px;top:632.7px" width="5.6" height="12.5" viewBox="0 0 5.6 12.5"><path d="M2.8 0L5.6 5.05H0Z M2.8 12.5L5.6 7.45H0Z" fill="#a0a0a0"/></svg>
<div class="lt" style="left:668px;top:629px;width:20px;height:20px;border-radius:4.5px 0 0 4.5px;background:linear-gradient(#a4a4a4,#8e8e8e)"></div>
<div class="menu" style="left:687px;top:629px;width:36px;height:20px;border-radius:0"></div>
<div class="lt" style="left:722px;top:629px;width:21px;height:20px;border-radius:0 4.5px 4.5px 0;background:linear-gradient(#a4a4a4,#8e8e8e)"></div>
<svg class="a" style="left:713.9px;top:632.7px" width="5.5" height="12.5" viewBox="0 0 5.5 12.5"><path d="M2.75 0L5.5 5.05H0Z M2.75 12.5L5.5 7.45H0Z" fill="#a0a0a0"/></svg>
<div class="lt" style="left:748px;top:629px;width:20px;height:20px;border-radius:4.5px;background:linear-gradient(#a4a4a4,#8e8e8e)"></div>
<svg class="a" style="left:662px;top:626px" width="110" height="24" viewBox="662 626 110 24"><path d="M673.6 638.7L678.2 634.1A3 3 0 0 1 682.4 638.3L677.8 642.9" stroke="#333" stroke-width="4" fill="none"/><path d="M673.6 638.7L678.2 634.1A3 3 0 0 1 682.4 638.3L677.8 642.9" stroke="#a9a9a9" stroke-width="2.3" fill="none"/><path d="M673.6 638.7L674.9 637.4M677.8 642.9L679.1 641.6" stroke="#dedede" stroke-width="2.3" fill="none"/><path d="M693.1 635.3V643.5M705.7 635.3V643.5M693.1 639.4H705.7" stroke="#e6e6e6" stroke-width="1.1" fill="none"/><path d="M695.8 637.6V641.2M703 637.6V641.2" stroke="#bdbdbd" stroke-width="0.9" fill="none"/><rect x="697.3" y="634.2" width="3.8" height="9.8" rx="1.7" fill="#1f5fe8"/><rect x="698.4" y="635.3" width="1.6" height="7.6" rx="0.8" fill="#fff"/><path d="M727 640.5H740.4M727 644H740.4M731.6 639V646.2M735.4 632V646.2M739 632V646.2" stroke="#333" stroke-width="2" fill="none" opacity="0.75"/><path d="M727 640.5H740.4M727 644H740.4M731.6 639V646.2M735.4 632V646.2M739 632V646.2" stroke="#f6f6f6" stroke-width="1" fill="none"/><circle cx="730.6" cy="635.6" r="4.1" fill="#f4f4f4" stroke="#1c1c1c" stroke-width="0.9"/><circle cx="730.6" cy="635.6" r="2.5" fill="#2a6af0"/><circle cx="730.6" cy="635.6" r="0.9" fill="#fff"/><g stroke="#1c1c1c" stroke-width="3.4" fill="none" stroke-linejoin="round"><path d="M764 633.2L759.4 637.8M759.2 634.2V638H763M752 645.4L756.2 641.2M752.6 641H756.4V644.8"/></g><g stroke="#f6f6f6" stroke-width="1.7" fill="none"><path d="M764 633.2L759.4 637.8M759.2 634.2V638H763M752 645.4L756.2 641.2M752.6 641H756.4V644.8"/></g><circle cx="764.4" cy="632.8" r="1.6" fill="#f0a030" stroke="#6a3a00" stroke-width="0.7"/><circle cx="751.7" cy="645.7" r="1.6" fill="#f0a030" stroke="#6a3a00" stroke-width="0.7"/></svg>
<div class="lt" style="left:773px;top:629px;width:20px;height:20px;border-radius:4.5px 0 0 4.5px;background:linear-gradient(#a4a4a4,#8e8e8e)"></div>
<div class="lt" style="left:792px;top:629px;width:21px;height:20px;border-radius:0 4.5px 4.5px 0;background:linear-gradient(#a4a4a4,#8e8e8e)"></div>
<svg class="a" style="left:770px;top:626px" width="46" height="24" viewBox="770 626 46 24"><path d="M777.4 633.6V632.4H780.6V633.6" fill="#e4e4e4" stroke="#1c1c1c" stroke-width="0.9"/><rect x="775.6" y="633.6" width="13.8" height="11.6" rx="1.2" fill="#dedede" stroke="#1c1c1c" stroke-width="1"/><rect x="776.8" y="638.8" width="3.2" height="5" fill="#4a4a4a"/><rect x="778" y="636.8" width="1.3" height="1.3" fill="#f01010"/><circle cx="783.7" cy="640.9" r="3.9" fill="#f4f4f4" stroke="#2a2a2a" stroke-width="0.8"/><circle cx="783.7" cy="640.9" r="2.5" fill="#3a2a3a"/><path d="M782 640.2A2 2 0 0 1 784.6 638.9" stroke="#4a70b8" stroke-width="1" fill="none"/><circle cx="784.6" cy="641.8" r="1" fill="#a03020"/><circle cx="787.6" cy="634.5" r="3" fill="#e0b820"/><path d="M787.6 632.2V636.8M785.3 634.5H789.9" stroke="#fff" stroke-width="1.3"/><rect x="795.4" y="638.3" width="13.4" height="8.1" fill="#3a3a3a" stroke="#141414" stroke-width="1"/><path d="M797 640H807.4" stroke="#f4f4f4" stroke-width="1.2" stroke-dasharray="2.4 1.1"/><path d="M797.4 643.6H806.8M803.2 642.2V645" stroke="#8a8a8a" stroke-width="0.9"/><path d="M796.4 636.6L807.6 632.4" stroke="#141414" stroke-width="3.2" stroke-linecap="round"/><path d="M797.6 636.1L807.4 632.5" stroke="#f4f4f4" stroke-width="1.5" stroke-dasharray="2.2 1.2"/><path d="M795.3 635.8L797.3 635.4 797.9 639.6 795.5 639.9Z" fill="#8ab8f0" stroke="#1c3a70" stroke-width="0.6"/></svg>
<span class='t' style='left:47.60px;top:15.50px;font-size:11px;line-height:11px;color:#000;letter-spacing:-0.034px;'>File</span><span class='t' style='left:85.70px;top:15.50px;font-size:11px;line-height:11px;color:#000;letter-spacing:-0.263px;'>Render</span><span class='t' style='left:140.30px;top:15.50px;font-size:11px;line-height:11px;color:#000;letter-spacing:0.029px;'>Window</span><span class='t' style='left:200.00px;top:15.80px;font-size:11px;line-height:11px;color:#000;letter-spacing:0.144px;'>Help</span><span class='t' style='left:275.60px;top:15.80px;font-size:11px;line-height:11px;color:#000;letter-spacing:0.063px;'>Default</span><span class='t' style='left:472.40px;top:15.80px;font-size:11px;line-height:11px;color:#000;letter-spacing:-0.221px;'>Scene</span><span class='t' style='left:649.10px;top:15.80px;font-size:11px;line-height:11px;color:#fff;letter-spacing:-0.088px;-webkit-text-stroke:0;'>Cycles Render</span><span class='t' style='left:796.30px;top:15.80px;font-size:11px;line-height:11px;color:#000;letter-spacing:0.396px;'>v2.77</span><span class='t' style='left:828.80px;top:15.80px;font-size:11px;line-height:11px;color:#000;letter-spacing:0.000px;'>|</span><span class='t' style='left:835.40px;top:15.80px;font-size:11px;line-height:11px;color:#000;letter-spacing:0.295px;'>Verts:60/60</span><span class='t' style='left:897.80px;top:15.80px;font-size:11px;line-height:11px;color:#000;letter-spacing:0.000px;'>|</span><span class='t' style='left:904.40px;top:15.80px;font-size:11px;line-height:11px;color:#000;letter-spacing:0.137px;'>Edges:100/100</span><span class='t' style='left:984.90px;top:15.80px;font-size:11px;line-height:11px;color:#000;letter-spacing:0.000px;'>|</span><span class='t' style='left:990.40px;top:15.80px;font-size:11px;line-height:11px;color:#000;letter-spacing:-0.094px;'>Faces</span><span class='t' style='left:176.00px;top:45.20px;font-size:11px;line-height:11px;color:#fff;letter-spacing:-0.035px;-webkit-text-stroke:0;'>Top Ortho</span><span class='t' style='left:226.30px;top:606.70px;font-size:11px;line-height:11px;color:#fff;letter-spacing:0.212px;-webkit-text-stroke:0;'>(1) Circle.001</span><span class='t' style='left:184.60px;top:564.70px;font-size:11px;line-height:11px;color:#00c800;letter-spacing:0.000px;'>y</span><span class='t' style='left:209.70px;top:589.20px;font-size:11px;line-height:11px;color:#c80000;letter-spacing:0.000px;'>x</span><span class='t' style='left:44.40px;top:36.02px;font-size:12px;line-height:12px;color:#000;letter-spacing:0.080px;'>Add Meshes</span><span class='t' style='left:35.00px;top:67.70px;font-size:11px;line-height:11px;color:#000;letter-spacing:0.206px;'>Primitives:</span><span class='t' style='left:35.00px;top:247.70px;font-size:11px;line-height:11px;color:#000;letter-spacing:0.107px;'>Special:</span><span class='t' style='left:24.20px;top:349.22px;font-size:12px;line-height:12px;color:#000;letter-spacing:0.004px;'>Add Circle</span><span class='t' style='left:14.30px;top:380.70px;font-size:11px;line-height:11px;color:#000;letter-spacing:0.232px;'>Vertices</span><span class='t' style='left:14.30px;top:425.70px;font-size:11px;line-height:11px;color:#000;letter-spacing:-0.125px;'>Radius</span><span class='t' style='left:14.30px;top:470.70px;font-size:11px;line-height:11px;color:#000;letter-spacing:-0.030px;'>Fill Type</span><span class='t' style='left:14.40px;top:490.70px;font-size:11px;line-height:11px;color:#fff;letter-spacing:0.183px;-webkit-text-stroke:0;'>Nothing</span><span class='t' style='left:32.20px;top:515.70px;font-size:11px;line-height:11px;color:#000;letter-spacing:-0.034px;'>Generate UVs</span><span class='t' style='left:32.20px;top:540.50px;font-size:11px;line-height:11px;color:#000;letter-spacing:0.147px;'>Align to View</span><span class='t' style='left:14.40px;top:565.70px;font-size:11px;line-height:11px;color:#000;letter-spacing:0.188px;'>Location</span><span class='t' style='left:48.20px;top:634.70px;font-size:11px;line-height:11px;color:#000;letter-spacing:0.086px;'>View</span><span class='t' style='left:93.40px;top:634.70px;font-size:11px;line-height:11px;color:#000;letter-spacing:-0.030px;'>Select</span><span class='t' style='left:144.00px;top:634.70px;font-size:11px;line-height:11px;color:#000;letter-spacing:-0.093px;'>Add</span><span class='t' style='left:183.60px;top:634.70px;font-size:11px;line-height:11px;color:#000;letter-spacing:-0.377px;'>Mesh</span><span class='t' style='left:246.10px;top:634.70px;font-size:11px;line-height:11px;color:#fff;letter-spacing:-0.059px;-webkit-text-stroke:0;'>Edit Mode</span><span class='t' style='left:493.40px;top:634.70px;font-size:11px;line-height:11px;color:#fff;letter-spacing:-0.099px;-webkit-text-stroke:0;'>Global</span><span class='t' style='left:82.50px;top:87.80px;font-size:11px;line-height:11px;color:#000;letter-spacing:-0.308px;'>Plane</span><span class='t' style='left:83.00px;top:106.70px;font-size:11px;line-height:11px;color:#000;letter-spacing:-0.074px;'>Cube</span><span class='t' style='left:81.30px;top:126.70px;font-size:11px;line-height:11px;color:#000;letter-spacing:0.113px;'>Circle</span><span class='t' style='left:71.50px;top:146.70px;font-size:11px;line-height:11px;color:#000;letter-spacing:-0.424px;'>UV Sphere</span><span class='t' style='left:70.20px;top:166.70px;font-size:11px;line-height:11px;color:#000;letter-spacing:-0.100px;'>Ico Sphere</span><span class='t' style='left:75.10px;top:186.70px;font-size:11px;line-height:11px;color:#000;letter-spacing:0.105px;'>Cylinder</span><span class='t' style='left:83.30px;top:206.70px;font-size:11px;line-height:11px;color:#000;letter-spacing:-0.299px;'>Cone</span><span class='t' style='left:83.00px;top:226.70px;font-size:11px;line-height:11px;color:#000;letter-spacing:-0.161px;'>Torus</span><span class='t' style='left:85.50px;top:267.20px;font-size:11px;line-height:11px;color:#000;letter-spacing:0.030px;'>Grid</span><span class='t' style='left:76.40px;top:286.70px;font-size:11px;line-height:11px;color:#000;letter-spacing:0.011px;'>Monkey</span><span class='t' style='left:104.00px;top:400.30px;font-size:11px;line-height:11px;color:#000;letter-spacing:0.175px;'>20</span><span class='t' style='left:86.60px;top:445.30px;font-size:11px;line-height:11px;color:#000;letter-spacing:0.494px;'>1.000</span><span class='t' style='left:79.40px;top:585.50px;font-size:11px;line-height:11px;color:#000;letter-spacing:0.557px;'>21.136</span><span class='t' style='left:76.40px;top:604.90px;font-size:11px;line-height:11px;color:#000;letter-spacing:0.500px;'>-11.977</span><span class='t' style='left:23.20px;top:585.70px;font-size:11px;line-height:11px;color:#000;letter-spacing:-0.303px;'>X:</span><span class='t' style='left:23.20px;top:604.70px;font-size:11px;line-height:11px;color:#000;letter-spacing:-0.298px;'>Y:</span><span class='t' style='left:4.6px;top:60.10px;font-size:12px;line-height:12px;color:#000;-webkit-text-stroke:0;letter-spacing:-0.604px;transform-origin:0 0;transform:rotate(-90deg)'>Tool</span><span class='t' style='left:4.6px;top:99.30px;font-size:12px;line-height:12px;color:#000;-webkit-text-stroke:0;letter-spacing:-0.629px;transform-origin:0 0;transform:rotate(-90deg)'>Crea</span><span class='t' style='left:4.6px;top:168.70px;font-size:12px;line-height:12px;color:#000;-webkit-text-stroke:0;letter-spacing:-0.613px;transform-origin:0 0;transform:rotate(-90deg)'>Shading /</span><span class='t' style='left:4.6px;top:213.00px;font-size:12px;line-height:12px;color:#000;-webkit-text-stroke:0;letter-spacing:-0.377px;transform-origin:0 0;transform:rotate(-90deg)'>Optio</span><span class='t' style='left:4.6px;top:281.90px;font-size:12px;line-height:12px;color:#000;-webkit-text-stroke:0;letter-spacing:-0.886px;transform-origin:0 0;transform:rotate(-90deg)'>Grease Pe</span><span class='t' style='left:4.6px;top:333.10px;font-size:12px;line-height:12px;color:#000;-webkit-text-stroke:0;letter-spacing:-0.394px;transform-origin:0 0;transform:rotate(-90deg)'>Relatio</span>
<svg class="a" style="left:0;top:0" width="1008" height="650" viewBox="0 0 1008 650"><path d="M18.1 113.3L152 113.3L155.7 155.5L130 154.3L60 148.8L56.5 150.6L52.5 151.2L17.3 143.6Z" fill="none" stroke="#fbfb12" stroke-width="6" stroke-linejoin="round" stroke-linecap="round"/><path d="M93.7 379.6L168.8 375.1L174 423.7L73.1 430.3" fill="none" stroke="#fbfb12" stroke-width="5.9" stroke-linejoin="round" stroke-linecap="round"/></svg>
</div>
</body></html>
